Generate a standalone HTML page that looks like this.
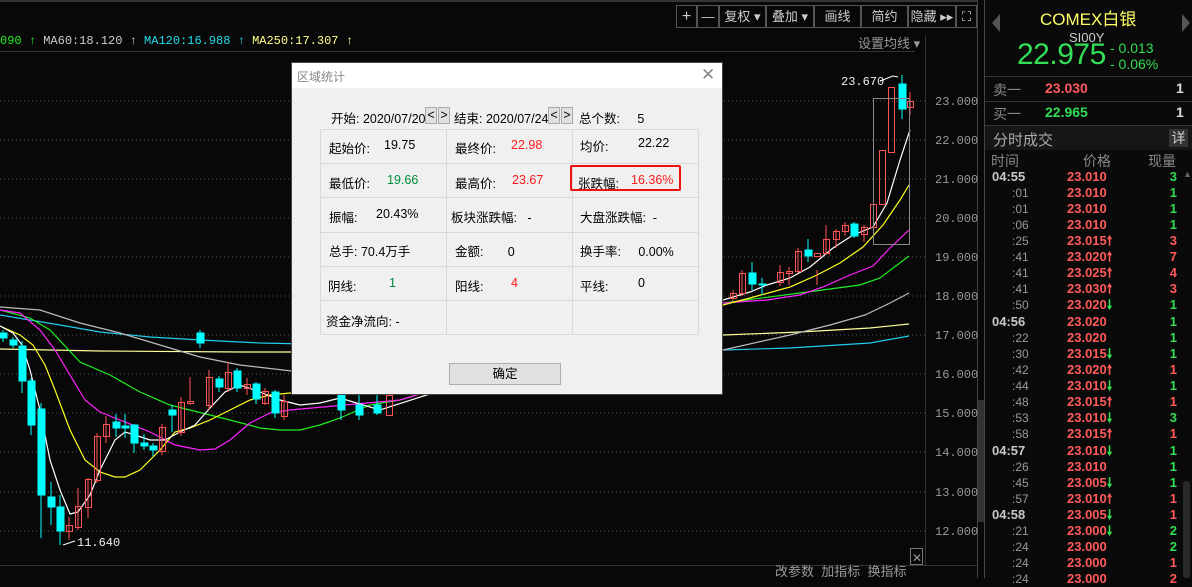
<!DOCTYPE html>
<html><head><meta charset="utf-8"><style>
*{margin:0;padding:0;box-sizing:border-box}
body{width:1192px;height:578px;background:#080808;overflow:hidden;position:relative;font-family:"Liberation Sans","Noto Sans CJK SC",sans-serif;color:#ccc}
.a{position:absolute;white-space:nowrap}
.tb{position:absolute;top:5px;height:23px;border:1px solid #555;color:#ccc;font-size:13px;line-height:21px;text-align:center}
.dl{position:absolute;left:291px;top:62px;width:432px;height:333px;background:#f0f0f0;border:1px solid #444;font-size:12.5px;color:#000}
.cell{position:absolute;border:1px solid #d8d8d8;background:#f0f0f0}
.r{color:#ff1a1a}.g{color:#008b3a}
.row{position:absolute;left:0;width:207px;height:16px;font-size:13px;font-weight:bold;line-height:16px}
.row .t{position:absolute;left:7px;color:#c8c8c8}
.row .ts{position:absolute;left:27px;color:#999;font-weight:normal;font-size:12px}
.row .p{position:absolute;left:82px;color:#ff5a5a}
.row .q{position:absolute;right:15px}
.up{color:#ff5a5a}.dn{color:#33dd55}
</style></head><body>
<div class="a" style="left:0;top:0;width:978px;height:2px;background:#333"></div>
<div class="a" style="left:0;top:51px;width:915px;height:1px;background:#333"></div>
<div class="a" style="left:925px;top:35px;width:1px;height:531px;background:#333"></div>
<div class="a" style="left:977px;top:0;width:1px;height:578px;background:#444"></div>
<div class="a" style="left:978px;top:400px;width:7px;height:122px;background:#333"></div>
<div class="a" style="left:984px;top:0;width:1px;height:578px;background:#444"></div>
<div class="a" style="left:0;top:565px;width:977px;height:1px;background:#333"></div>

<div class="tb" style="left:676px;width:21px;font-size:16px">+</div>
<div class="tb" style="left:697px;width:22px">—</div>
<div class="tb" style="left:719px;width:47px">复权 ▾</div>
<div class="tb" style="left:766px;width:48px">叠加 ▾</div>
<div class="tb" style="left:814px;width:47px">画线</div>
<div class="tb" style="left:861px;width:47px">简约</div>
<div class="tb" style="left:908px;width:48px">隐藏 ▸▸</div>
<div class="tb" style="left:956px;width:21px">⛶</div>

<div class="a" style="left:0;top:33px;font-family:'Liberation Mono',monospace;font-size:12px;line-height:16px"><span style="color:#22ee22">090 ↑</span> <span style="color:#ccc">MA60:18.120 ↑</span> <span style="color:#22ddee">MA120:16.988 ↑</span> <span style="color:#ffff88">MA250:17.307 ↑</span></div>
<div class="a" style="left:858px;top:33px;font-size:13px;color:#999">设置均线 ▾</div>

<svg class="a" style="left:0;top:0" width="978" height="578">
<g stroke="#555" stroke-dasharray="1,3" stroke-width="1">
<line x1="0" y1="101" x2="925" y2="101"/><line x1="0" y1="140" x2="925" y2="140"/><line x1="0" y1="179" x2="925" y2="179"/><line x1="0" y1="218" x2="925" y2="218"/><line x1="0" y1="257" x2="925" y2="257"/><line x1="0" y1="296" x2="925" y2="296"/><line x1="0" y1="335" x2="925" y2="335"/><line x1="0" y1="374" x2="925" y2="374"/><line x1="0" y1="413" x2="925" y2="413"/><line x1="0" y1="452" x2="925" y2="452"/><line x1="0" y1="492" x2="925" y2="492"/><line x1="0" y1="531" x2="925" y2="531"/>
</g>
<g font-family="Liberation Mono,monospace" font-size="12" fill="#999">
<text x="935" y="105">23.000</text><text x="935" y="144">22.000</text><text x="935" y="183">21.000</text><text x="935" y="222">20.000</text><text x="935" y="261">19.000</text><text x="935" y="300">18.000</text><text x="935" y="339">17.000</text><text x="935" y="378">16.000</text><text x="935" y="417">15.000</text><text x="935" y="456">14.000</text><text x="935" y="496">13.000</text><text x="935" y="535">12.000</text>
</g>
<g fill="none" stroke-width="1.2">
<polyline stroke="#ffff99" points="0,349 100,351 240,352 400,352 723,335 800,332 870,328 909,324"/>
<polyline stroke="#22ccee" points="0,315 30,320 60,325 100,332 150,337 200,340 260,343 400,346 723,350 790,348 870,343 909,336"/>
<polyline stroke="#bbbbbb" points="0,307 40,310 80,323 120,333 160,345 200,357 240,365 300,372 723,350 790,335 830,325 865,315 890,303 909,293"/>
<polyline stroke="#22ee22" points="0,310 30,318 50,330 80,362 110,375 140,392 170,405 190,410 210,415 230,420 260,428 280,430 300,430 320,425 340,418 370,405 400,400 723,303 800,293 860,285 880,278 909,256"/>
<polyline stroke="#ff22ff" points="0,310 20,313 40,330 55,350 70,375 85,400 100,412 120,420 150,432 175,445 200,450 215,449 230,440 250,423 270,413 290,410 400,400 723,303 767,300 800,295 823,287 850,275 873,266 890,248 909,230"/>
<polyline stroke="#ffff22" points="0,326 20,335 33,345 45,365 55,390 70,430 85,460 100,472 115,477 125,477 140,470 160,450 175,432 190,428 210,420 230,410 250,400 270,395 290,393 400,390 723,305 750,298 790,287 817,275 840,263 863,247 883,225 900,200 909,185"/>
<polyline stroke="#ffffff" points="0,326 13,333 22,345 30,370 40,410 50,460 60,490 70,514 78,512 90,495 100,470 115,440 125,432 135,435 150,440 165,440 180,432 195,425 210,408 225,392 240,385 260,392 280,400 300,405 320,403 340,398 380,410 723,300 750,292 767,285 790,278 810,267 833,248 853,235 873,227 887,203 900,160 910,130"/>
</g>
<g stroke="#00ffff" fill="#00ffff">
<line x1="3" y1="330" x2="3" y2="342"/><rect x="0" y="333" width="7" height="5"/>
<line x1="13" y1="337" x2="13" y2="348"/><rect x="10" y="340" width="7" height="5"/>
<line x1="22" y1="341" x2="22" y2="393"/><rect x="19" y="346" width="7" height="35"/>
<line x1="31" y1="378" x2="31" y2="435"/><rect x="28" y="381" width="7" height="44"/>
<line x1="41" y1="403" x2="41" y2="538"/><rect x="38" y="409" width="7" height="86"/>
<line x1="51" y1="482" x2="51" y2="525"/><rect x="48" y="497" width="7" height="10"/>
<line x1="60" y1="495" x2="60" y2="545"/><rect x="57" y="507" width="7" height="24"/>
<line x1="116" y1="414" x2="116" y2="437"/><rect x="113" y="422" width="7" height="6"/>
<line x1="125" y1="414" x2="125" y2="438"/><rect x="122" y="426" width="7" height="2"/>
<line x1="134" y1="424" x2="134" y2="453"/><rect x="131" y="425" width="7" height="18"/>
<line x1="144" y1="434" x2="144" y2="450"/><rect x="141" y="443" width="7" height="3"/>
<line x1="153" y1="443" x2="153" y2="456"/><rect x="150" y="446" width="7" height="4"/>
<line x1="172" y1="405" x2="172" y2="432"/><rect x="169" y="410" width="7" height="5"/>
<line x1="200" y1="330" x2="200" y2="348"/><rect x="197" y="333" width="7" height="10"/>
<line x1="219" y1="376" x2="219" y2="392"/><rect x="216" y="379" width="7" height="8"/>
<line x1="237" y1="368" x2="237" y2="392"/><rect x="234" y="371" width="7" height="17"/>
<line x1="256" y1="382" x2="256" y2="404"/><rect x="253" y="384" width="7" height="15"/>
<line x1="275" y1="390" x2="275" y2="418"/><rect x="272" y="392" width="7" height="21"/>
<line x1="341" y1="395" x2="341" y2="420"/><rect x="338" y="395" width="7" height="15"/>
<line x1="359" y1="395" x2="359" y2="420"/><rect x="356" y="405" width="7" height="10"/>
<line x1="377" y1="395" x2="377" y2="415"/><rect x="374" y="405" width="7" height="8"/>
<line x1="752" y1="262" x2="752" y2="290"/><rect x="749" y="273" width="7" height="11"/>
<line x1="762" y1="278" x2="762" y2="295"/><rect x="759" y="284" width="7" height="1"/>
<line x1="808" y1="239" x2="808" y2="262"/><rect x="805" y="250" width="7" height="6"/>
<line x1="854" y1="222" x2="854" y2="238"/><rect x="851" y="224" width="7" height="12"/>
<line x1="902" y1="75" x2="902" y2="119"/><rect x="899" y="84" width="7" height="25"/>
</g>
<g stroke="#ff5555" fill="none">
<line x1="69" y1="517" x2="69" y2="540"/><rect x="66.5" y="525.5" width="6" height="6"/>
<line x1="78" y1="488" x2="78" y2="530"/><rect x="75.5" y="506.5" width="6" height="21"/>
<line x1="88" y1="478" x2="88" y2="518"/><rect x="85.5" y="479.5" width="6" height="28"/>
<line x1="97" y1="433" x2="97" y2="483"/><rect x="94.5" y="436.5" width="6" height="44"/>
<line x1="106" y1="416" x2="106" y2="443"/><rect x="103.5" y="424.5" width="6" height="12"/>
<line x1="162" y1="424" x2="162" y2="455"/><rect x="159.5" y="427.5" width="6" height="24"/>
<line x1="181" y1="397" x2="181" y2="436"/><rect x="178.5" y="402.5" width="6" height="30"/>
<line x1="190" y1="377" x2="190" y2="405"/><rect x="187.5" y="401.5" width="6" height="2"/>
<line x1="209" y1="370" x2="209" y2="410"/><rect x="206.5" y="377.5" width="6" height="28"/>
<line x1="228" y1="362" x2="228" y2="392"/><rect x="225.5" y="372.5" width="6" height="16"/>
<line x1="247" y1="378" x2="247" y2="395"/><rect x="244.5" y="384.5" width="6" height="4"/>
<line x1="265" y1="388" x2="265" y2="405"/><rect x="262.5" y="391.5" width="6" height="12"/>
<line x1="284" y1="395" x2="284" y2="420"/><rect x="281.5" y="401.5" width="6" height="15"/>
<rect x="386.5" y="395.5" width="6" height="20"/>
<line x1="733" y1="290" x2="733" y2="302"/><rect x="730.5" y="293.5" width="6" height="5"/>
<line x1="742" y1="270" x2="742" y2="296"/><rect x="739.5" y="273.5" width="6" height="20"/>
<line x1="780" y1="265" x2="780" y2="286"/><rect x="777.5" y="272.5" width="6" height="10"/>
<line x1="789" y1="267" x2="789" y2="285"/><rect x="786.5" y="271.5" width="6" height="2"/>
<line x1="798" y1="248" x2="798" y2="273"/><rect x="795.5" y="251.5" width="6" height="20"/>
<line x1="817" y1="270" x2="817" y2="285"/><rect x="814.5" y="253.5" width="6" height="3"/>
<line x1="826" y1="225" x2="826" y2="255"/><rect x="823.5" y="239.5" width="6" height="14"/>
<line x1="836" y1="229" x2="836" y2="248"/><rect x="833.5" y="231.5" width="6" height="8"/>
<line x1="845" y1="222" x2="845" y2="236"/><rect x="842.5" y="225.5" width="6" height="6"/>
<line x1="864" y1="225" x2="864" y2="242"/><rect x="861.5" y="227.5" width="6" height="7"/>
<rect x="870.5" y="204.5" width="6" height="23"/>
<rect x="879.5" y="150.5" width="6" height="54"/>
<rect x="888.5" y="87.5" width="6" height="65"/>
<line x1="910" y1="92" x2="910" y2="115"/><rect x="907.5" y="101.5" width="6" height="6"/>
</g>
<rect x="873.5" y="98.5" width="36" height="146" fill="none" stroke="#888"/>
<g font-family="Liberation Mono,monospace" font-size="12" fill="#eee"><text x="841" y="85">23.670</text><text x="77" y="546">11.640</text></g>
<polyline points="880,81 893,76 898,77" stroke="#fff" fill="none"/>
<polyline points="63,545 75,541" stroke="#fff" fill="none"/>
<rect x="910.5" y="548.5" width="12" height="16" fill="none" stroke="#777"/>
<text x="912" y="562" fill="#999" font-size="12">✕</text>
</svg>
<div class="a" style="left:775px;top:565px;font-size:13px;color:#999;line-height:14px">改参数 &nbsp;加指标 &nbsp;换指标</div>

<div class="dl">
 <div class="a" style="left:0;top:0;width:430px;height:26px;background:#fff;border-bottom:1px solid #f0f0f0"></div>
 <div class="a" style="left:5px;top:5px;font-size:12px;color:#888">区域统计</div>
 <div class="a" style="left:409px;top:2px;font-size:17px;color:#888">✕</div>
 <div class="a" style="left:39px;top:45px">开始: 2020/07/20</div>
 <div class="a" style="left:133px;top:44px;width:12px;height:17px;border:1px solid #aaa;background:#e1e1e1;text-align:center;line-height:15px">&lt;</div>
 <div class="a" style="left:146px;top:44px;width:12px;height:17px;border:1px solid #aaa;background:#e1e1e1;text-align:center;line-height:15px">&gt;</div>
 <div class="a" style="left:162px;top:45px">结束: 2020/07/24</div>
 <div class="a" style="left:256px;top:44px;width:12px;height:17px;border:1px solid #aaa;background:#e1e1e1;text-align:center;line-height:15px">&lt;</div>
 <div class="a" style="left:269px;top:44px;width:12px;height:17px;border:1px solid #aaa;background:#e1e1e1;text-align:center;line-height:15px">&gt;</div>
 <div class="a" style="left:287px;top:45px">总个数: &nbsp; &nbsp; 5</div>

 <div class="cell" style="left:28px;top:66px;width:127px;height:35px"></div>
 <div class="cell" style="left:154px;top:66px;width:127px;height:35px"></div>
 <div class="cell" style="left:280px;top:66px;width:127px;height:35px"></div>
 <div class="cell" style="left:28px;top:100px;width:127px;height:35px"></div>
 <div class="cell" style="left:154px;top:100px;width:127px;height:35px"></div>
 <div class="cell" style="left:280px;top:100px;width:127px;height:35px"></div>
 <div class="cell" style="left:28px;top:134px;width:127px;height:36px"></div>
 <div class="cell" style="left:154px;top:134px;width:127px;height:36px"></div>
 <div class="cell" style="left:280px;top:134px;width:127px;height:36px"></div>
 <div class="cell" style="left:28px;top:169px;width:127px;height:35px"></div>
 <div class="cell" style="left:154px;top:169px;width:127px;height:35px"></div>
 <div class="cell" style="left:280px;top:169px;width:127px;height:35px"></div>
 <div class="cell" style="left:28px;top:203px;width:127px;height:35px"></div>
 <div class="cell" style="left:154px;top:203px;width:127px;height:35px"></div>
 <div class="cell" style="left:280px;top:203px;width:127px;height:35px"></div>
 <div class="cell" style="left:28px;top:237px;width:127px;height:35px"></div>
 <div class="cell" style="left:154px;top:237px;width:127px;height:35px"></div>
 <div class="cell" style="left:280px;top:237px;width:127px;height:35px"></div>

 <div class="a" style="left:37px;top:75px">起始价:</div><div class="a" style="left:92px;top:75px">19.75</div>
 <div class="a" style="left:163px;top:75px">最终价:</div><div class="a r" style="left:219px;top:75px">22.98</div>
 <div class="a" style="left:288px;top:73px">均价:</div><div class="a" style="left:346px;top:73px">22.22</div>
 <div class="a" style="left:37px;top:110px">最低价:</div><div class="a g" style="left:95px;top:110px">19.66</div>
 <div class="a" style="left:163px;top:110px">最高价:</div><div class="a r" style="left:220px;top:110px">23.67</div>
 <div class="a" style="left:278px;top:102px;width:111px;height:26px;border:2px solid #ee1111;border-radius:2px"></div>
 <div class="a" style="left:286px;top:110px">张跌幅:</div><div class="a r" style="left:339px;top:110px">16.36%</div>
 <div class="a" style="left:37px;top:144px">振幅:</div><div class="a" style="left:84px;top:144px">20.43%</div>
 <div class="a" style="left:159px;top:144px">板块涨跌幅: &nbsp; -</div>
 <div class="a" style="left:288px;top:144px">大盘涨跌幅: &nbsp;-</div>
 <div class="a" style="left:37px;top:178px">总手: 70.4万手</div>
 <div class="a" style="left:163px;top:178px">金额: &nbsp; &nbsp; &nbsp; 0</div>
 <div class="a" style="left:288px;top:178px">换手率: &nbsp; &nbsp; 0.00%</div>
 <div class="a" style="left:36px;top:213px">阴线:</div><div class="a g" style="left:97px;top:213px">1</div>
 <div class="a" style="left:163px;top:213px">阳线:</div><div class="a r" style="left:219px;top:213px">4</div>
 <div class="a" style="left:288px;top:213px">平线:</div><div class="a" style="left:346px;top:213px">0</div>
 <div class="a" style="left:34px;top:248px">资金净流向: -</div>
 <div class="a" style="left:157px;top:300px;width:112px;height:22px;border:1px solid #adadad;background:#e1e1e1;text-align:center;line-height:20px">确定</div>
</div>

<!-- right panel -->
<div class="a" style="left:985px;top:0;width:207px;height:578px;background:#0a0a0a"></div>
<svg class="a" style="left:992px;top:14px" width="10" height="18"><polygon points="8,0 8,18 0,9" fill="#555"/></svg>
<svg class="a" style="left:1180px;top:14px" width="10" height="18"><polygon points="2,0 2,18 10,9" fill="#555"/></svg>
<div class="a" style="left:1040px;top:5px;font-size:17px;color:#ffff66">COMEX白银</div>
<div class="a" style="left:1069px;top:30px;font-size:13px;color:#ccc">SI00Y</div>
<div class="a" style="left:1017px;top:38px;font-size:30px;color:#33dd55;letter-spacing:-0.5px">22.975</div>
<div class="a" style="left:1110px;top:40px;font-size:14px;color:#33dd55;line-height:16px">- 0.013<br>- 0.06%</div>
<div class="a" style="left:985px;top:76px;width:207px;height:1px;background:#333"></div>
<div class="a" style="left:993px;top:80px;font-size:14px;color:#888">卖一</div>
<div class="a" style="left:1045px;top:80px;font-size:14px;color:#ff5a5a;font-weight:bold">23.030</div>
<div class="a" style="left:1176px;top:80px;font-size:14px;color:#ddd;font-weight:bold">1</div>
<div class="a" style="left:985px;top:101px;width:207px;height:1px;background:#333"></div>
<div class="a" style="left:993px;top:104px;font-size:14px;color:#888">买一</div>
<div class="a" style="left:1045px;top:104px;font-size:14px;color:#33dd55;font-weight:bold">22.965</div>
<div class="a" style="left:1176px;top:104px;font-size:14px;color:#ddd;font-weight:bold">1</div>
<div class="a" style="left:985px;top:125px;width:207px;height:1px;background:#333"></div>
<div class="a" style="left:985px;top:126px;width:207px;height:24px;background:#161616"></div>
<div class="a" style="left:993px;top:129px;font-size:15px;color:#aaa">分时成交</div>
<div class="a" style="left:1169px;top:129px;width:19px;height:18px;background:#333;color:#ccc;font-size:14px;text-align:center;line-height:18px">详</div>
<div class="a" style="left:991px;top:151px;font-size:14px;color:#888">时间</div>
<div class="a" style="left:1083px;top:151px;font-size:14px;color:#888">价格</div>
<div class="a" style="left:1148px;top:151px;font-size:14px;color:#888">现量</div>
<div class="a" style="left:1183px;top:169px;color:#666;font-size:9px">▲</div>
<div class="a" style="left:1183px;top:481px;width:7px;height:97px;background:#2a2a2a;border-radius:3px"></div>

<div class="a" style="left:985px;top:169px;width:207px">
<div class="row" style="top:0"><span class="t">04:55</span><span class="p">23.010</span><span class="q dn">3</span></div>
<div class="row" style="top:16px"><span class="ts">:01</span><span class="p">23.010</span><span class="q dn">1</span></div>
<div class="row" style="top:32px"><span class="ts">:01</span><span class="p">23.010</span><span class="q dn">1</span></div>
<div class="row" style="top:48px"><span class="ts">:06</span><span class="p">23.010</span><span class="q dn">1</span></div>
<div class="row" style="top:64px"><span class="ts">:25</span><span class="p">23.015<span class="up">🠕</span></span><span class="q up">3</span></div>
<div class="row" style="top:80px"><span class="ts">:41</span><span class="p">23.020<span class="up">🠕</span></span><span class="q up">7</span></div>
<div class="row" style="top:96px"><span class="ts">:41</span><span class="p">23.025<span class="up">🠕</span></span><span class="q up">4</span></div>
<div class="row" style="top:112px"><span class="ts">:41</span><span class="p">23.030<span class="up">🠕</span></span><span class="q up">3</span></div>
<div class="row" style="top:128px"><span class="ts">:50</span><span class="p">23.020<span class="dn">🠗</span></span><span class="q dn">1</span></div>
<div class="row" style="top:145px"><span class="t">04:56</span><span class="p">23.020</span><span class="q dn">1</span></div>
<div class="row" style="top:161px"><span class="ts">:22</span><span class="p">23.020</span><span class="q dn">1</span></div>
<div class="row" style="top:177px"><span class="ts">:30</span><span class="p">23.015<span class="dn">🠗</span></span><span class="q dn">1</span></div>
<div class="row" style="top:193px"><span class="ts">:42</span><span class="p">23.020<span class="up">🠕</span></span><span class="q up">1</span></div>
<div class="row" style="top:209px"><span class="ts">:44</span><span class="p">23.010<span class="dn">🠗</span></span><span class="q dn">1</span></div>
<div class="row" style="top:225px"><span class="ts">:48</span><span class="p">23.015<span class="up">🠕</span></span><span class="q up">1</span></div>
<div class="row" style="top:241px"><span class="ts">:53</span><span class="p">23.010<span class="dn">🠗</span></span><span class="q dn">3</span></div>
<div class="row" style="top:257px"><span class="ts">:58</span><span class="p">23.015<span class="up">🠕</span></span><span class="q up">1</span></div>
<div class="row" style="top:274px"><span class="t">04:57</span><span class="p">23.010<span class="dn">🠗</span></span><span class="q dn">1</span></div>
<div class="row" style="top:290px"><span class="ts">:26</span><span class="p">23.010</span><span class="q dn">1</span></div>
<div class="row" style="top:306px"><span class="ts">:45</span><span class="p">23.005<span class="dn">🠗</span></span><span class="q dn">1</span></div>
<div class="row" style="top:322px"><span class="ts">:57</span><span class="p">23.010<span class="up">🠕</span></span><span class="q up">1</span></div>
<div class="row" style="top:338px"><span class="t">04:58</span><span class="p">23.005<span class="dn">🠗</span></span><span class="q up">1</span></div>
<div class="row" style="top:354px"><span class="ts">:21</span><span class="p">23.000<span class="dn">🠗</span></span><span class="q dn">2</span></div>
<div class="row" style="top:370px"><span class="ts">:24</span><span class="p">23.000</span><span class="q dn">2</span></div>
<div class="row" style="top:386px"><span class="ts">:24</span><span class="p">23.000</span><span class="q up">1</span></div>
<div class="row" style="top:402px"><span class="ts">:24</span><span class="p">23.000</span><span class="q up">2</span></div>
</div>
</body></html>
